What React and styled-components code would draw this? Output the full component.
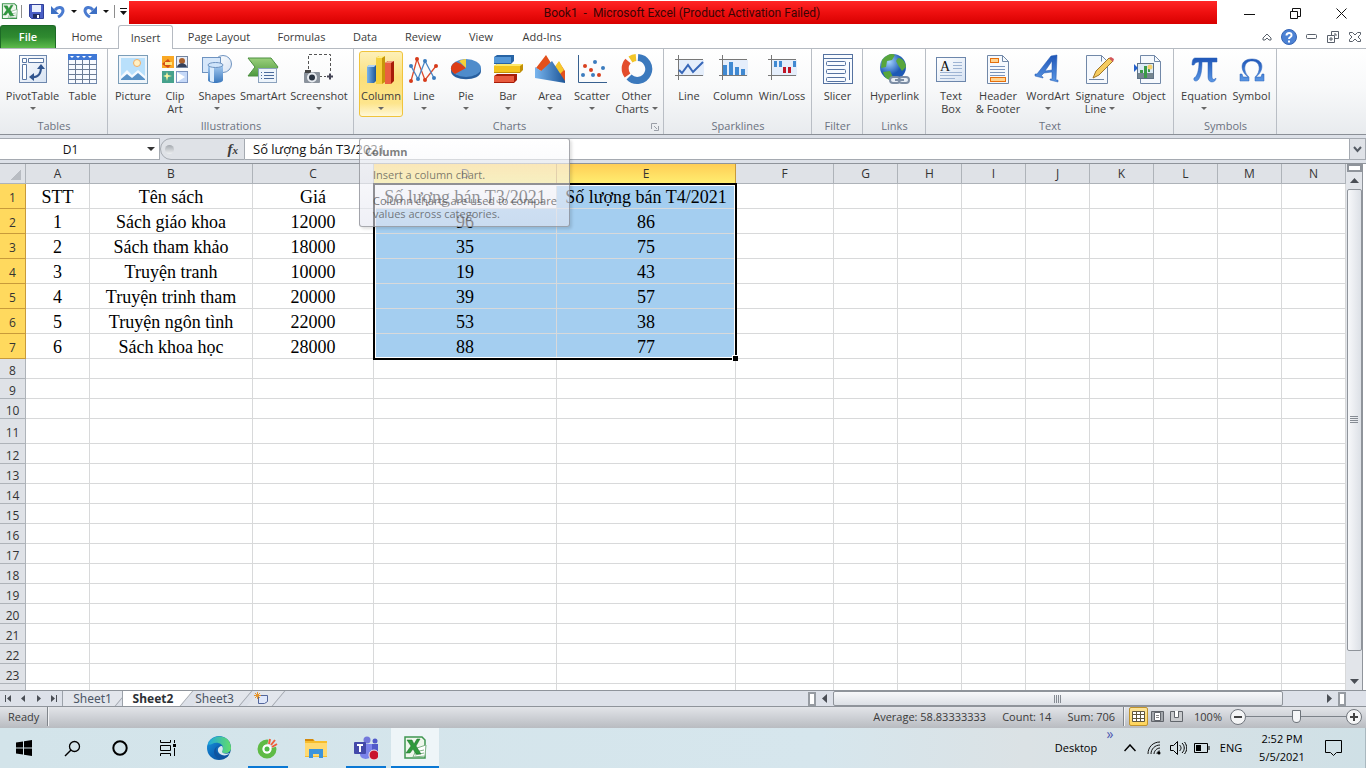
import React from 'react';
import styled, { createGlobalStyle, css } from 'styled-components';

const Global = createGlobalStyle`
  *, *::before, *::after { box-sizing: border-box; }
  body { margin: 0; font-family: 'Open Sans', 'Noto Sans', sans-serif; font-size: 12px; color: #3b3b3b; background: #fff; }
  button, input { font: inherit; color: inherit; border: 0; padding: 0; background: none; margin: 0; }
  svg { display: block; }
`;

const Page = styled.div`
  display: flex;
  flex-direction: column;
  height: 100vh;
  min-height: 480px;
  overflow: hidden;
`;

/* ---------- Title bar ---------- */
const TitleBar = styled.header`
  display: flex;
  height: 25px;
  flex: none;
`;
const QuickAccess = styled.div`
  display: flex;
  align-items: center;
  width: 129px;
  height: 23px;
  padding-left: 1px;
`;
const QuickButton = styled.button`
  display: flex;
  justify-content: center;
  width: ${(p) => p.$w}px;
`;
const Sep = styled.span`
  width: 1px;
  height: 13px;
  margin: 0 3px;
  background: #8d8d8d;
`;
const Caption = styled.h1`
  flex: 1;
  margin: 1px 0;
  padding-left: 18px;
  font-family: Roboto, sans-serif;
  font-size: 12px;
  line-height: 24px;
  font-weight: 400;
  text-align: center;
  white-space: pre;
  color: #3a0505;
  background: linear-gradient(#ff2626, #ee0f0f 50%, #d80000);
`;
const WindowButtons = styled.div`
  display: flex;
  padding: 2px 2px 0 9px;
`;
const WindowButton = styled.button`
  display: flex;
  align-items: center;
  justify-content: center;
  width: ${(p) => p.$w || 46}px;
  height: 23px;
`;

/* ---------- Ribbon tabs ---------- */
const TabRow = styled.nav`
  display: flex;
  flex: none;
  height: 24px;
  border-bottom: 1px solid #b5bac1;
`;
const Tab = styled.button`
  width: ${(p) => p.$w}px;
  height: 23px;
  font-size: 11px;
  line-height: 22px;
  text-align: center;
  ${(p) => p.$file && css`
    color: #fff;
    font-weight: 600;
    border: 1px solid #1d6a26;
    border-bottom: 0;
    border-radius: 3px 3px 0 0;
    background: linear-gradient(#257a2b, #2f8a30 50%, #5cbb4b);
  `}
  ${(p) => p.$active && css`
    height: 24px;
    border: 1px solid #b5bac1;
    border-bottom: 0;
    border-radius: 3px 3px 0 0;
    background: #fff;
  `}
`;
const TabTools = styled.div`
  display: flex;
  margin-left: auto;
`;

/* ---------- Ribbon ---------- */
const Ribbon = styled.section`
  position: relative;
  z-index: 5;
  display: flex;
  flex: none;
  height: 86px;
  background: linear-gradient(#fff, #f8f9fa 45%, #e8ebee);
  border-bottom: 1px solid #8a8f96;
`;
const Group = styled.div`
  position: relative;
  display: flex;
  flex-direction: column;
  padding: 2px 4px 0 ${(p) => p.$left || 4}px;
  box-shadow: inset -1px 0 #b9bec5;
`;
const GroupButtons = styled.div`
  display: flex;
  height: 68px;
`;
const GroupLabel = styled.div`
  font-size: 11px;
  line-height: 14px;
  text-align: center;
  color: #6b7280;
`;
const ToolWrap = styled.div`
  position: relative;
`;
const Tool = styled.button`
  display: flex;
  flex-direction: column;
  align-items: center;
  width: ${(p) => p.$w}px;
  height: 66px;
  padding-top: 2px;
  border: 1px solid transparent;
  border-radius: 3px;
  font-size: 11px;
  line-height: 13px;
  white-space: nowrap;
  ${(p) => p.$hot && css`
    border-color: #f0c43c;
    background: linear-gradient(#fdf0b8, #fbdf7a 40%, #fde58c 80%, #fff8d8);
  `}
`;
const ToolText = styled.span`
  margin-top: 3px;
  display: block;
`;
const ToolLine = styled.span`
  display: flex;
  align-items: center;
  justify-content: center;
  gap: 3px;
  height: 13px;
`;
const Down = styled.i`
  border: ${(p) => p.$size || 3}px solid transparent;
  border-top-color: ${(p) => p.$c || '#666'};
  border-bottom: 0;
`;
const Launcher = styled.button`
  position: absolute;
  right: 5px;
  bottom: 3px;
`;
const Tooltip = styled.div`
  position: absolute;
  top: 87px;
  left: 0;
  width: 211px;
  height: 89px;
  padding: 8px 13px 0;
  border: 1px solid rgba(110, 112, 120, 0.6);
  border-radius: 3px;
  background: linear-gradient(rgba(255, 255, 255, 0.6), rgba(228, 229, 240, 0.6));
  box-shadow: 2px 2px 3px rgba(0, 0, 0, 0.12);
  font-size: 11px;
  line-height: 13px;
  color: rgba(70, 70, 70, 0.7);
  white-space: nowrap;
`;
const TipTitle = styled.strong`
  display: block;
  margin: -2px 0 10px -8px;
`;
const TipText = styled.p`
  margin: 0 0 13px;
`;

/* ---------- Formula bar ---------- */
const FormulaBar = styled.div`
  display: flex;
  flex: none;
  height: 28px;
  padding: 3px 0;
  background: #dde1e8;
`;
const NameBox = styled.div`
  display: flex;
  align-items: center;
  gap: 6px;
  width: 160px;
  border: 1px solid #a5aab1;
  border-left: 0;
  background: #fff;
`;
const NameInput = styled.input`
  width: 141px;
  text-align: center;
  color: #111;
`;
const FxArea = styled.div`
  display: flex;
  align-items: center;
  justify-content: space-between;
  width: 85px;
  padding: 0 6px 0 4px;
  border: 1px solid #a5aab1;
  border-radius: 11px 0 0 11px;
  background: #dfe2e7;
`;
const Knob = styled.span`
  width: 9px;
  height: 9px;
  border-radius: 5px;
  background: linear-gradient(#a4a9af, #eef0f2);
`;
const Fx = styled.button`
  font: italic bold 15px/20px 'Liberation Serif', serif;
  small { font-size: 11px; }
`;
const FormulaInput = styled.input`
  flex: 1;
  min-width: 0;
  padding-left: 8px;
  border: solid #a5aab1;
  border-width: 1px 0;
  background: #fff;
  font-size: 13px;
  color: #111;
`;
const Expand = styled.button`
  display: flex;
  align-items: center;
  justify-content: center;
  width: 17px;
  border: 1px solid #a5aab1;
  background: #dfe2e7;
`;

/* ---------- Grid ---------- */
const SheetArea = styled.main`
  display: flex;
  flex: 1;
  min-height: 0;
  border-top: 1px solid #8f949b;
`;
const GridView = styled.div`
  position: relative;
  flex: 1;
  min-width: 0;
  overflow: hidden;
`;
const Grid = styled.table`
  width: 100%;
  min-width: 1346px;
  table-layout: fixed;
  border-collapse: separate;
  border-spacing: 0;
`;
const ColHead = styled.th`
  height: 20px;
  padding: 0;
  font-weight: 400;
  font-size: 12px;
  line-height: 19px;
  color: #333;
  border: solid #aeb3b9;
  border-width: 0 1px 1px 0;
  background: ${(p) => (p.$on ? 'linear-gradient(#ffce56, #ffed70)' : '#dfe2e7')};
  ${(p) => p.$on && css`border-right-color: #c89a3a;`}
`;
const RowHead = styled.th`
  padding: 3px 0 0;
  font-weight: 400;
  font-size: 12px;
  line-height: 15px;
  color: #333;
  border: solid ${(p) => (p.$on ? '#c89a3a' : '#aeb3b9')};
  border-width: 0 1px 1px 0;
  background: ${(p) => (p.$on ? '#ffd95e' : '#dfe2e7')};
`;
const Row = styled.tr`
  height: ${(p) => (p.$tall ? 25 : 20)}px;
`;
const Cell = styled.td`
  padding: ${(p) => (p.$filled ? 2 : 0)}px 0 0;
  border: solid #d8d9da;
  border-width: 0 1px 1px 0;
  font: 18px/22px 'Liberation Serif', serif;
  color: #000;
  text-align: center;
  white-space: nowrap;
  background: ${(p) => (p.$sel ? '#a4cef0' : '#fff')};
`;
const Selection = styled.div`
  position: absolute;
  left: 373px;
  top: 19px;
  width: 364px;
  height: 177px;
  border: 2px solid #000;
  box-shadow: inset 0 0 0 1px #fff;
  &::after {
    content: '';
    position: absolute;
    right: -3px;
    bottom: -3px;
    width: 6px;
    height: 6px;
    background: #000;
    border: solid #fff;
    border-width: 1px 0 0 1px;
  }
`;
const Corner = styled.div`
  margin: 3px 4px 2px auto;
  width: 11px;
  height: 11px;
  background: linear-gradient(135deg, transparent 50%, #b8bcc2 50%);
`;

const VScroll = styled.div`
  display: flex;
  flex-direction: column;
  align-items: center;
  width: 17px;
  margin-right: 3px;
  border-right: 1px solid #8f949b;
  background: #e2e5ea;
`;
const VSplit = styled.div`
  width: 15px;
  height: 8px;
  border: 2px solid #8f949b;
  background: #fff;
`;
const ScrollArrow = styled.button`
  display: flex;
  align-items: center;
  justify-content: center;
  flex: none;
  width: 17px;
  height: 17px;
`;
const VThumb = styled.div`
  display: flex;
  align-items: center;
  justify-content: center;
  flex: 1;
  width: 15px;
  margin-bottom: 22px;
  border: 1px solid #8f949b;
  border-radius: 2px;
  background: linear-gradient(90deg, #f7f8fa, #dce0e6);
`;

/* ---------- Sheet tabs ---------- */
const SheetBar = styled.div`
  display: flex;
  flex: none;
  height: 17px;
  padding-right: 20px;
  border: solid #8f949b;
  border-width: 1px 0;
  background: #dde1e9;
`;
const SheetNav = styled.div`
  display: flex;
  align-items: center;
  width: 62px;
  padding-left: 1px;
`;
const NavButton = styled.button`
  display: flex;
  justify-content: center;
  width: 15px;
`;
const SheetTabs = styled.div`
  display: flex;
  flex: 1;
`;
const SheetTab = styled.button`
  position: relative;
  z-index: ${(p) => (p.$active ? 2 : 1)};
  width: ${(p) => p.$w}px;
  height: 15px;
  padding-right: ${(p) => (p.$first ? 0 : 4)}px;
  font: 12px/15px 'Noto Sans', sans-serif;
  font-weight: ${(p) => (p.$active ? 700 : 400)};
  color: ${(p) => (p.$active ? '#2e3136' : '#4c5666')};
  ${(p) => (p.$active || p.$first) && css`
    border-left: 1px solid #9ca2aa;
    background: linear-gradient(${p.$active ? '#fff, #fff' : '#e3e6ec, #e3e6ec'}) 0 0 / 50% 100% no-repeat;
  `}
  &::before {
    content: '';
    position: absolute;
    z-index: -1;
    inset: 0 0 0 20%;
    border-right: 1px solid #9ca2aa;
    transform: skewX(-40deg);
    background: ${(p) => (p.$active ? '#fff' : '#e3e6ec')};
  }
  svg { margin: 0 auto; }
`;
const HScroll = styled.div`
  display: flex;
  align-items: center;
  flex: 0 0 40%;
`;
const HSplit = styled.div`
  width: 8px;
  height: 14px;
  border: 2px solid #969ba2;
  background: #fff;
`;
const HThumb = styled.div`
  display: flex;
  align-items: center;
  justify-content: center;
  flex: 1;
  height: 15px;
  margin-right: 38px;
  border: 1px solid #8f949b;
  border-radius: 2px;
  background: linear-gradient(#f7f8fa, #dce0e6);
`;

/* ---------- Status bar ---------- */
const StatusBar = styled.footer`
  display: flex;
  align-items: center;
  flex: none;
  height: 21px;
  padding: 0 4px 2px 8px;
  font-size: 11px;
  background: linear-gradient(#e2e4e8, #cdd0d5 50%, #b9bcc1);
`;
const StatusSep = styled.span`
  width: 2px;
  height: 19px;
  margin: 0 4px 0 8px;
  background: linear-gradient(90deg, #80858b 50%, #f1f2f4 50%);
`;
const Totals = styled.div`
  display: flex;
  gap: 16px;
  margin-left: auto;
`;
const ViewButton = styled.button`
  display: flex;
  align-items: center;
  justify-content: center;
  width: 19px;
  height: 19px;
  border: 1px solid ${(p) => (p.$on ? '#c2942c' : 'transparent')};
  border-radius: 2px;
  background: ${(p) => (p.$on ? 'linear-gradient(#fbe49b, #ffd55a)' : 'none')};
`;
const ZoomText = styled.button`
  width: 44px;
  text-align: center;
`;
const Zoom = styled.input`
  appearance: none;
  width: 100px;
  height: 17px;
  background: linear-gradient(#7c8289, #7c8289) 0 50% / 100% 1px no-repeat;
  &::-webkit-slider-thumb {
    appearance: none;
    width: 9px;
    height: 13px;
    border: 1px solid #6d737a;
    border-radius: 1px 1px 5px 5px;
    background: #f5f6f8;
  }
`;

/* ---------- Taskbar ---------- */
const Taskbar = styled.footer`
  display: flex;
  align-items: stretch;
  flex: none;
  height: 40px;
  color: #000;
  background: linear-gradient(90deg, #d3e4ea, #d6e6ed 60%, #dbe2e5 75%, #cfe0e6);
`;
const TaskButton = styled.button`
  position: relative;
  display: flex;
  align-items: center;
  justify-content: center;
  width: 48px;
  margin-right: ${(p) => p.$gap || 0}px;
  background: ${(p) => (p.$active ? '#eef5f8' : 'none')};
  ${(p) => p.$running && css`
    &::after {
      content: '';
      position: absolute;
      bottom: 0;
      left: ${p.$active ? 0 : 4}px;
      right: ${p.$active ? 0 : 4}px;
      height: 2px;
      background: #0a78d4;
    }
  `}
`;
const Tray = styled.div`
  display: flex;
  align-items: center;
  margin-left: auto;
`;
const TrayItem = styled.button`
  display: flex;
  align-items: center;
  justify-content: center;
  width: ${(p) => p.$w}px;
  height: 40px;
  font-size: 11px;
  line-height: 18px;
  white-space: pre;
`;
const More = styled(TrayItem)`
  align-items: flex-start;
  font-size: 14px;
  line-height: 12px;
  color: #4b57b0;
`;
const ShowDesktop = styled.button`
  width: 12px;
  height: 40px;
  margin-left: 4px;
  border-right: 1px solid #a9b8bf;
`;

/* ---------- Drawings ---------- */
const Svg = ({ s = 32, w, h, children, box }) => (
  <svg width={w || s} height={h || s} viewBox={box || `0 0 ${w || s} ${h || s}`} fill="none" aria-hidden="true">{children}</svg>
);
const DefsSvg = styled.svg`
  position: absolute;
`;
const Defs = () => (
  <DefsSvg width="0" height="0" aria-hidden="true">
    <defs>
      <linearGradient id="blue" x2="0" y2="1"><stop stopColor="#a9cdf2" /><stop offset="1" stopColor="#3a78bd" /></linearGradient>
      <linearGradient id="bar" x2="1" y2="0"><stop stopColor="#79b5ee" /><stop offset="1" stopColor="#1d5698" /></linearGradient>
      <linearGradient id="paper" x2="1" y2="1"><stop stopColor="#fff" /><stop offset="1" stopColor="#d7e3f3" /></linearGradient>
      <linearGradient id="green" x2="0" y2="1"><stop stopColor="#9bd07c" /><stop offset="1" stopColor="#4e9a3e" /></linearGradient>
      <linearGradient id="edge" x2="1" y2="1"><stop stopColor="#1b9de2" /><stop offset=".5" stopColor="#0c66b8" /><stop offset="1" stopColor="#0b4a92" /></linearGradient>
      <linearGradient id="edge2" x2="1" y2="0"><stop stopColor="#20a7dc" /><stop offset="1" stopColor="#62dd6a" /></linearGradient>
      <radialGradient id="globe" cx=".35" cy=".3"><stop stopColor="#a5d4ff" /><stop offset="1" stopColor="#1d59b5" /></radialGradient>
      <linearGradient id="glyph" x2="0" y2="1"><stop stopColor="#1f56b8" /><stop offset="1" stopColor="#5a97e4" /></linearGradient>
    </defs>
  </DefsSvg>
);

const navy = '#5572a0';
const icons = {
  pivot: <><rect x="2.5" y="1.5" width="27" height="27" fill="url(#paper)" stroke="#6d87ad" /><path d="M5.500 4.500h4v4h-4zM11.500 4.500h15v4h-15zM5.500 10.500h4v15h-4z" fill="#fff" stroke="#5b78a4" /><path d="M14 23c8 1 10-4 10-10" stroke="#30548e" strokeWidth="2" /><path d="M12 23l5-4v8zM24 10l-4 5h8z" fill="#30548e" /></>,
  table: <><rect x="1.5" y=".5" width="28" height="29" fill="#f7faff" stroke="#7189ad" /><rect x="1" y="0" width="29" height="6" fill="#3f78d6" /><path d="M3 2h4l-2 2zM9 2h4l-2 2zM15 2h4l-2 2zM21 2h4l-2 2z" fill="#fff" /><path d="M8.500 6v24M15.500 6v24M22.500 6v24M1 10.500h29M1 15.500h29M1 20.500h29M1 25.500h29" stroke="#6b7c96" /></>,
  picture: <><rect x="1.5" y="1.5" width="29" height="28" fill="#eef5fb" stroke="#7b9db8" /><rect x="4" y="4" width="24" height="22" fill="#b9e0fb" /><circle cx="20" cy="9" r="3.5" fill="#fff0c4" stroke="#f3ae65" /><path d="M4 22l6-6 5 5 6-5 7 6v4H4z" fill="#f5faff" /><path d="M4 25l6-5 5 4 6-5 7 6v1H4z" fill="#5a93c8" /></>,
  clip: <><rect x="3" y="2" width="12" height="12" fill="#f9a824" /><path d="M3 10l6-5 4 5-4 4z" fill="#d34c16" /><path d="M6 8h7v3H6z" fill="#ffe47b" /><rect x="17.5" y="2.5" width="11" height="11" fill="#e8eef8" stroke="#7385a0" /><circle cx="23" cy="7" r="3" fill="#a9602d" /><path d="M18 13c1-5 9-5 10 0z" fill="#33415c" /><rect x="3" y="17" width="12" height="12" fill="#46a28d" /><path d="M8 18l1 3 4 1-4 1-1 4-1-4-3-1 3-1z" fill="#f9f3a0" /><rect x="17.5" y="17.5" width="11" height="11" fill="#c6d9f8" stroke="#7c95c2" /><path d="M18 18l8 5-8 5z" fill="#fff" /></>,
  shapes: <><circle cx="22" cy="10" r="8.5" fill="url(#paper)" stroke="#6e93c0" /><rect x="1.5" y="3.5" width="18" height="15" fill="#d6e7fa" stroke="#6e93c0" /><path d="M7 11v15c0 4 15 4 15 0V11z" fill="url(#blue)" /><path d="M9 13h4v15c-3 0-4-1-4-1z" fill="#dcecfc" /><ellipse cx="14.5" cy="11" rx="7.5" ry="2.5" fill="#cfe4fa" stroke="#6e93c0" /></>,
  smart: <><path d="M1 4h23l7 9-7 9H1l7-9z" fill="url(#green)" stroke="#4c8f40" /><rect x="11.5" y="14.5" width="18" height="14" fill="#edf4fb" stroke="#8ba2bd" /><path d="M17 18.500h10M17 21.500h10M17 24.500h10M14 18.500h1M14 21.500h1M14 24.500h1" stroke="#4b6b9c" /></>,
  shot: <><path d="M5.500 15V.5h22v17M16 22.500h7" stroke="#555" strokeDasharray="3 2" /><path d="M24 22.500h6M27 19.500v6" stroke="#445" strokeWidth="2" /><rect x="1" y="18" width="16" height="11" rx="1" fill="#8a929c" /><rect x="2" y="16" width="6" height="3" fill="#444" /><circle cx="9" cy="23.5" r="5" fill="#e8ecf1" /><circle cx="9" cy="23.5" r="3" fill="#2a3442" /></>,
  column: <><path d="M2 13l2-2h7v16l-2 2H2z" fill="url(#bar)" /><path d="M2 13l2-2h7l-2 2z" fill="#b0d2f2" /><path d="M11 4l3-2h6v26l-3 2h-6z" fill="#c6960a" /><path d="M11 4h6v26h-6z" fill="#f5d03c" /><path d="M11 4l3-2h6l-3 2z" fill="#fff08a" /><path d="M20 9l3-2h6v20l-3 3h-6z" fill="#a71c08" /><path d="M20 9h6v21h-6z" fill="#ea5f41" /><path d="M20 9l3-2h6l-3 2z" fill="#f29b7e" /></>,
  line: <><path d="M3 27L9 5l8 21 11-14" stroke="#dd4a2b" strokeWidth="1.3" /><path d="M3 12l7 13L17 7l9 17" stroke="#4a86c5" strokeWidth="1.3" /><g fill="#d63a1a"><circle cx="3" cy="27" r="2" /><circle cx="9" cy="5" r="2" /><circle cx="17" cy="26" r="2" /><circle cx="28" cy="12" r="2" /></g><g fill="#3a7bbd"><circle cx="3" cy="12" r="2" /><circle cx="10" cy="25" r="2" /><circle cx="17" cy="7" r="2" /><circle cx="26" cy="24" r="2" /></g></>,
  pie: <><path d="M1 14v3c0 11 30 11 30 0v-3z" fill="#285f9f" /><ellipse cx="16" cy="14" rx="15" ry="9" fill="#4f8ccb" /><path d="M16 14L5 20c-6-4-5-9 1-12l5 2z" fill="#dd3e16" /><path d="M16 14L9 7c2-1 5-2 7-2z" fill="#f5cf38" /></>,
  bar: <><path d="M2 3l3-2h17v6l-3 3H2z" fill="#2763a4" /><path d="M2 3h17v6H2z" fill="#5597d7" /><path d="M2 12l3-2h26v6l-3 3H2z" fill="#c18f06" /><path d="M2 12h26v6H2z" fill="#f3c41d" /><path d="M2 12l3-2h26l-3 2z" fill="#fde86b" /><path d="M2 22l3-2h20v6l-3 3H2z" fill="#a71c08" /><path d="M2 22h20v6H2z" fill="#e85a3e" /></>,
  area: <><path d="M2 14L12 1l8 13 5-6 6 9v10l-14-4z" fill="#e2501c" /><path d="M20 14l5-7 5 9-5 5z" fill="#f6c82c" /><path d="M1 13l6 4 11-10 13 20v2L1 24z" fill="url(#bar)" /></>,
  scatter: <><path d="M2.500 1v27.500H31" stroke="#37608f" /><g fill="#d8401e"><circle cx="9" cy="12" r="2" /><circle cx="15" cy="16" r="2" /><circle cx="23" cy="21" r="2" /></g><g fill="#3c7cbe"><circle cx="19" cy="8" r="2" /><circle cx="27" cy="14" r="2" /><circle cx="7" cy="21" r="2" /><circle cx="17" cy="21" r="2" /></g></>,
  other: <><path d="M17 3.500A11.500 11.500 0 1 1 8 23" stroke="#3b79bd" strokeWidth="7" /><path d="M15 3.500A11.500 11.500 0 009.500 5.500" stroke="#f2c528" strokeWidth="7" /><path d="M7 7a11.500 11.500 0 00-.5 14.500" stroke="#e34d2c" strokeWidth="7" /></>,
  sline: <><rect x="5" y="6" width="26" height="16" fill="#e5eefb" /><path d="M2 5.500h28M2 21.500h28M5.500 1v25" stroke="#777" /><path d="M6 16l3 3 6-8 5 7 10-10" stroke="#3767b8" strokeWidth="2" /></>,
  scol: <><rect x="5" y="6" width="26" height="16" fill="#e5eefb" /><path d="M2 5.500h28M2 21.500h28M5.500 1v25" stroke="#777" /><path d="M6 11h4v10H6zM12 8h4v13h-4zM18 13h4v8h-4zM24 15h4v6h-4z" fill="#4089d2" /></>,
  swin: <><rect x="5" y="6" width="26" height="16" fill="#e5eefb" /><path d="M2 5.500h28M2 21.500h28M5.500 1v25" stroke="#777" /><path d="M8 7h3v6H8zM13 7h3v6h-3zM27 7h3v6h-3z" fill="#4089d2" /><path d="M17 13h3v6h-3zM22 13h3v6h-3z" fill="#c01526" /></>,
  slicer: <><rect x="1.5" y=".5" width="29" height="29" fill="#f8fbff" stroke={navy} /><path d="M2 4.500h28M27.500 8v18" stroke={navy} /><rect x="4.5" y="7.5" width="19" height="4" rx="1" stroke={navy} /><rect x="4.5" y="15.5" width="19" height="4" rx="1" stroke={navy} /><rect x="4.5" y="23.5" width="19" height="4" rx="1" stroke={navy} /></>,
  link: <><circle cx="14" cy="13" r="13" fill="url(#globe)" /><path d="M3 6c5-6 10-7 13-5l-3 5-5 1-1 6-5 1zM19 4c5 0 8 5 8 9l-4 4-4-6-2-4zM4 18l7-1 3 6-3 3c-4-1-6-4-7-8z" fill="#58a63c" /><g stroke="#7d8ea5" strokeWidth="2"><rect x="11" y="23" width="10" height="6" rx="3" fill="#e8eef5" /><rect x="20" y="23" width="10" height="6" rx="3" fill="#e8eef5" /><path d="M16 26h9" /></g></>,
  textbox: <><rect x="1.5" y="3.5" width="29" height="24" fill="url(#paper)" stroke="#6c86ab" /><text x="5" y="17" fontFamily="Liberation Serif" fontSize="14" fill="#111">A</text><path d="M18 8.500h9M18 11.500h9M18 14.500h9M5 18.500h22M5 21.500h22M5 24.500h15" stroke="#9eb4d3" /></>,
  header: <><path d="M5.500 1.500h15l6 6v22h-21z" fill="#f6f9fd" stroke="#7188a8" /><path d="M20.500 1.500v6h6" stroke="#7188a8" /><path d="M8 12.500h15M8 15.500h15M8 18.500h15M8 21.500h15" stroke="#7a94bb" /><rect x="8.5" y="4.5" width="8" height="4" fill="#ffd28f" stroke="#e56f0c" /><rect x="8.5" y="23.5" width="15" height="4" fill="#ffd28f" stroke="#e56f0c" /></>,
  wordart: <path fillRule="evenodd" d="M19 2l6-1-1 25h2v2l-8-2v-1h2v-7l-8 1-3 3 2 1v1l-8-2v-2h2zm1 5l-7 10 7-1z" fill="url(#glyph)" stroke="#1f56b0" strokeWidth=".5" />,
  sign: <><path d="M2.500 1.500h15l6 6v22h-21z" fill="#f6f9fd" stroke="#7188a8" /><path d="M17.500 1.500v6M5 25.500h15" stroke="#7188a8" /><path d="M9 24l3-7L25 4l4 3-14 14z" fill="#f6cc60" stroke="#9f7628" /><path d="M25 4l2-1 3 2-1 3z" fill="#d4555a" /></>,
  object: <><path d="M7.500 1.500h14l6 6v22h-20z" fill="#f6f9fd" stroke="#7188a8" /><path d="M21.500 1.500v6h6" stroke="#7188a8" /><rect x="4.5" y="9.5" width="16" height="15" fill="#dceaf5" stroke="#5e7287" /><path d="M5 19h15v5H5z" fill="#75858f" /><path d="M11 12h3v12h-3zM7 16h3v3H7zM15 15h2v3h-2z" fill="#3b9a48" /><circle cx="17" cy="13" r="2.5" fill="#f5d06c" /><path d="M1 10l4 4-4 4z" fill="#2561cb" /></>,
  pi: <path d="M7 4h22v4h-5v14c0 4 2 4 4 2 0 5-8 6-8-1V8h-6c0 8-1 15-4 18-2 2-5 1-4-2 3-1 5-8 5-16-3 0-4 1-5 3H4c0-4 1-7 3-7z" fill="url(#glyph)" stroke="#2a62ba" strokeWidth=".5" />,
  omega: <path d="M4 27v-7h2l1 3h5C4 17 3 5 16 5s12 12 4 18h5l1-3h2v7h-9v-4c6-5 6-16-3-16s-9 11-3 16v4z" fill="url(#glyph)" stroke="#2a62ba" strokeWidth=".5" />,
};

const groups = [
  ['Tables', [['pivot', 57, 'PivotTable', null, true], ['table', 43, 'Table']]],
  ['Illustrations', [['picture', 42, 'Picture'], ['clip', 42, 'Clip', 'Art'], ['shapes', 42, 'Shapes', null, true], ['smart', 50, 'SmartArt'], ['shot', 62, 'Screenshot', null, true]]],
  ['Charts', [['column', 44, 'Column', null, true], ['line', 42, 'Line', null, true], ['pie', 42, 'Pie', null, true], ['bar', 42, 'Bar', null, true], ['area', 42, 'Area', null, true], ['scatter', 42, 'Scatter', null, true], ['other', 47, 'Other', 'Charts', true]]],
  ['Sparklines', [['sline', 42, 'Line'], ['scol', 46, 'Column'], ['swin', 52, 'Win/Loss']]],
  ['Filter', [['slicer', 43, 'Slicer']]],
  ['Links', [['link', 55, 'Hyperlink']]],
  ['Text', [['textbox', 42, 'Text', 'Box'], ['header', 52, 'Header', '& Footer'], ['wordart', 48, 'WordArt', null, true], ['sign', 56, 'Signature', 'Line', true], ['object', 42, 'Object']]],
  ['Symbols', [['pi', 52, 'Equation', null, true], ['omega', 43, 'Symbol']]],
];

const tabs = [['Home', 62], ['Insert', 55], ['Page Layout', 92], ['Formulas', 73], ['Data', 54], ['Review', 62], ['View', 54], ['Add-Ins', 68]];

const columns = [['A', 64], ['B', 163], ['C', 121], ['D', 183], ['E', 179], ['F', 98], ['G', 64], ['H', 64], ['I', 64], ['J', 64], ['K', 64], ['L', 64], ['M', 64], ['N', null]];

const data = [
  ['STT', 'Tên sách', 'Giá', 'Số lượng bán T3/2021', 'Số lượng bán T4/2021'],
  ['1', 'Sách giáo khoa', '12000', '96', '86'],
  ['2', 'Sách tham khảo', '18000', '35', '75'],
  ['3', 'Truyện tranh', '10000', '19', '43'],
  ['4', 'Truyện trinh tham', '20000', '39', '57'],
  ['5', 'Truyện ngôn tình', '22000', '53', '38'],
  ['6', 'Sách khoa học', '28000', '88', '77'],
];

const ExcelIcon = ({ s }) => (
  <Svg s={s} box="0 0 24 24">
    <path d="M2 1h17l3 3v18H2z" fill="#eef7ec" stroke="#3f9650" strokeWidth="1.5" />
    <path d="M14 12l9-3-1 11-12 1z" fill="#fff" stroke="#7fb287" />
    <path d="M12 16l9-2M12 19l9-2" stroke="#7fb287" />
    <path d="M4 4h5l2 4 3-5h3l-4 7 5 8h-5l-3-5-3 4H3l5-7z" fill="#2f9a3c" stroke="#1a6b2a" strokeWidth=".5" />
  </Svg>
);
const Undo = ({ flip }) => (
  <Svg s={16}><g transform={flip ? 'translate(16 0) scale(-1 1)' : undefined}>
    <path d="M5 6c3-4 8-3 8 1-.5 3-3 5-5 6" stroke="#4a7bd0" strokeWidth="3" /><path d="M1 2v8h8z" fill="#3c6fc4" />
  </g></Svg>
);
const Arrow = ({ d }) => <Svg w={9} h={9}><path d={d} fill="#4a4e55" /></Svg>;

function RibbonTool({ tool: [icon, w, label, second, menu] }) {
  const hot = icon === 'column';
  return (
    <ToolWrap>
      <Tool $w={w} $hot={hot}>
        <Svg>{icons[icon]}</Svg>
        <ToolText>
          <ToolLine>{label}</ToolLine>
          {(second || menu) && <ToolLine>{second}{menu && <Down />}</ToolLine>}
        </ToolText>
      </Tool>
      {hot && (
        <Tooltip role="tooltip">
          <TipTitle>Column</TipTitle>
          <TipText>Insert a column chart.</TipText>
          <TipText>Column charts are used to compare<br />values across categories.</TipText>
        </Tooltip>
      )}
    </ToolWrap>
  );
}

export default function App() {
  return (
    <Page>
      <Global />
      <Defs />
      <TitleBar>
        <QuickAccess>
          <ExcelIcon s={17} />
          <Sep />
          <QuickButton $w={22} aria-label="Save"><Svg s={15}><path d="M.5 .5h14v14h-12l-2-2z" fill="#4a5fc5" stroke="#303f98" /><path d="M3 1h9v7H3z" fill="#e9effc" /><path d="M4 10h7v4H4z" fill="#222f63" /><path d="M8 11h2v3H8z" fill="#fff" /></Svg></QuickButton>
          <QuickButton $w={22} aria-label="Undo"><Undo /></QuickButton>
          <QuickButton $w={10} aria-label="Undo list"><Down $c="#111" /></QuickButton>
          <QuickButton $w={22} aria-label="Redo"><Undo flip /></QuickButton>
          <QuickButton $w={10} aria-label="Redo list"><Down $c="#111" /></QuickButton>
          <Sep />
          <QuickButton $w={10} aria-label="Customize toolbar"><Svg w={7} h={8}><path d="M0 .5h7" stroke="#111" /><path d="M0 3h7L3.500 7z" fill="#111" /></Svg></QuickButton>
        </QuickAccess>
        <Caption>{'Book1  -  Microsoft Excel (Product Activation Failed)'}</Caption>
        <WindowButtons>
          <WindowButton aria-label="Minimize"><Svg s={11}><path d="M0 6.500h11" stroke="#111" /></Svg></WindowButton>
          <WindowButton aria-label="Restore"><Svg s={11}><path d="M.5 3.500h7v7h-7zM2.500 3V.5h8v8H8" stroke="#111" /></Svg></WindowButton>
          <WindowButton aria-label="Close"><Svg s={11}><path d="M.5 .5l10 10M10.500 .5l-10 10" stroke="#111" /></Svg></WindowButton>
        </WindowButtons>
      </TitleBar>

      <TabRow>
        <Tab $w={56} $file>File</Tab>
        {tabs.map(([t, w]) => <Tab key={t} $w={w} $active={t === 'Insert'}>{t}</Tab>)}
        <TabTools>
          <WindowButton $w={22} aria-label="Collapse ribbon"><Svg w={10} h={8}><path d="M1 5l4-4 4 4v2H7L5 5 3 7H1z" stroke="#59606b" /></Svg></WindowButton>
          <WindowButton $w={22} aria-label="Help"><Svg s={16}><circle cx="8" cy="8" r="7.5" fill="#4c82d4" stroke="#3565b5" /><path d="M5.500 6.500C5.500 3 11 3 10.500 6.500 10.500 8 8 8 8 10" stroke="#fff" strokeWidth="2" /><path d="M7 11.500h2v2H7z" fill="#fff" /></Svg></WindowButton>
          <WindowButton $w={22} aria-label="Minimize workbook"><Svg w={11} h={5}><rect x=".5" y=".5" width="10" height="4" rx="1" stroke="#59606b" /></Svg></WindowButton>
          <WindowButton $w={22} aria-label="Restore workbook"><Svg s={12}><path d="M4.500 4V.5h7v7H8M.5 4.500h7v7h-7zM3 7h2v2H3zM7 3h2v2" stroke="#59606b" /></Svg></WindowButton>
          <WindowButton $w={22} aria-label="Close workbook"><Svg w={12} h={10}><path d="M.5 .5h3L6 3 8.500 .5h3v2L9 5l2.500 2.500v2h-3L6 7 3.500 9.500h-3v-2L3 5 .5 2.500z" stroke="#59606b" /></Svg></WindowButton>
        </TabTools>
      </TabRow>

      <Ribbon>
        {groups.map(([name, tools]) => (
          <Group key={name} $left={name === 'Charts' ? 5 : 4}>
            <GroupButtons>{tools.map((t) => <RibbonTool key={t[0]} tool={t} />)}</GroupButtons>
            <GroupLabel>{name}</GroupLabel>
            {name === 'Charts' && <Launcher aria-label="Chart options"><Svg s={8}><path d="M.5 6V.5H6M3 3l3 3M7.500 3v4.500H3" stroke="#9a9fa7" /></Svg></Launcher>}
          </Group>
        ))}
      </Ribbon>

      <FormulaBar>
        <NameBox><NameInput aria-label="Name box" defaultValue="D1" /><Down $c="#333" $size={4} /></NameBox>
        <FxArea><Knob /><Fx aria-label="Insert function">f<small>x</small></Fx></FxArea>
        <FormulaInput aria-label="Formula bar" defaultValue="Số lượng bán T3/2021" />
        <Expand aria-label="Expand formula bar"><Svg w={9} h={7}><path d="M1 1l3.500 4L8 1" stroke="#555b64" strokeWidth="2" /></Svg></Expand>
      </FormulaBar>

      <SheetArea>
        <GridView>
          <Grid>
            <colgroup>
              <col width="26" />
              {columns.map(([c, w]) => <col key={c} width={w || undefined} />)}
            </colgroup>
            <thead>
              <tr>
                <ColHead><Corner /></ColHead>
                {columns.map(([c]) => <ColHead key={c} scope="col" $on={c === 'D' || c === 'E'}>{c}</ColHead>)}
              </tr>
            </thead>
            <tbody>
              {Array.from({ length: 24 }, (_, r) => (
                <Row key={r} $tall={r < 7 || r === 10}>
                  <RowHead scope="row" $on={r < 7}>{r + 1}</RowHead>
                  {columns.map(([c], i) => (
                    <Cell key={c} $filled={r < 7} $sel={r < 7 && (i === 4 || (i === 3 && r > 0))}>{data[r]?.[i]}</Cell>
                  ))}
                </Row>
              ))}
            </tbody>
          </Grid>
          <Selection />
        </GridView>
        <VScroll>
          <VSplit />
          <ScrollArrow aria-label="Scroll up"><Arrow d="M0 7l4.500-5L9 7z" /></ScrollArrow>
          <VThumb><Svg s={8}><path d="M0 .5h8M0 2.500h8M0 4.500h8M0 6.500h8" stroke="#858b93" /></Svg></VThumb>
          <ScrollArrow aria-label="Scroll down"><Arrow d="M0 2l4.500 5L9 2z" /></ScrollArrow>
        </VScroll>
      </SheetArea>

      <SheetBar>
        <SheetNav>
          <NavButton aria-label="First sheet"><Arrow d="M1 1h1v7H1zM7 1v7L3 4.500z" /></NavButton>
          <NavButton aria-label="Previous sheet"><Arrow d="M6 1v7L2 4.500z" /></NavButton>
          <NavButton aria-label="Next sheet"><Arrow d="M3 1v7l4-3.500z" /></NavButton>
          <NavButton aria-label="Last sheet"><Arrow d="M2 1v7l4-3.500zM7 1h1v7H7z" /></NavButton>
        </SheetNav>
        <SheetTabs>
          <SheetTab $w={60} $first>Sheet1</SheetTab>
          <SheetTab $w={65} $active>Sheet2</SheetTab>
          <SheetTab $w={59}>Sheet3</SheetTab>
          <SheetTab $w={33} aria-label="Insert worksheet"><Svg w={14} h={13}><path d="M4.500 3.500h9v6l-3 2h-6z" fill="#dfe7fa" stroke="#53669c" /><path d="M3.500 0v7M0 3.500h7M1 1l5 5M6 1L1 6" stroke="#e5952c" /></Svg></SheetTab>
        </SheetTabs>
        <HScroll>
          <HSplit />
          <ScrollArrow aria-label="Scroll left"><Arrow d="M7 0v9L2 4.500z" /></ScrollArrow>
          <HThumb><Svg s={8}><path d="M.5 0v8M2.500 0v8M4.500 0v8M6.500 0v8" stroke="#858b93" /></Svg></HThumb>
          <ScrollArrow aria-label="Scroll right"><Arrow d="M2 0v9l5-4.500z" /></ScrollArrow>
          <HSplit />
        </HScroll>
      </SheetBar>

      <StatusBar>
        <span>Ready</span>
        <StatusSep />
        <Totals><span>Average: 58.83333333</span><span>Count: 14</span><span>Sum: 706</span></Totals>
        <StatusSep />
        <ViewButton $on aria-label="Normal view"><Svg w={13} h={11}><path d="M.5 .5h12v10H.5zM4.500 0v11M8.500 0v11M0 3.500h13M0 7.500h13" fill="#fff" stroke="#61573d" /></Svg></ViewButton>
        <ViewButton aria-label="Page layout view"><Svg w={13} h={11}><path d="M.5 .5h12v10H.5z" fill="#a4a8ad" stroke="#61656b" /><path d="M3.500 1.500h6v8h-6z" fill="#fff" stroke="#61656b" /><path d="M5 4.500h3M5 6.500h3" stroke="#888" /></Svg></ViewButton>
        <ViewButton aria-label="Page break view"><Svg w={13} h={11}><path d="M.5 .5h12v10H.5z" fill="#c9cbce" stroke="#61656b" /><path d="M4.500 0v6.500h4V0" fill="#fff" stroke="#61656b" /></Svg></ViewButton>
        <ZoomText>100%</ZoomText>
        <button aria-label="Zoom out"><Svg s={16}><circle cx="8" cy="8" r="7.5" fill="#f4f5f6" stroke="#71767d" /><path d="M4 8h8" stroke="#444" strokeWidth="2" /></Svg></button>
        <Zoom type="range" aria-label="Zoom" defaultValue={50} />
        <button aria-label="Zoom in"><Svg s={16}><circle cx="8" cy="8" r="7.5" fill="#f4f5f6" stroke="#71767d" /><path d="M4 8h8M8 4v8" stroke="#444" strokeWidth="2" /></Svg></button>
      </StatusBar>

      <Taskbar>
        <TaskButton aria-label="Start"><Svg s={16}><path d="M0 2.500l7-1v6H0zM8 1.300L16 0v7.500H8zM0 8.500h7v6l-7-1zM8 8.500h8V16l-8-1.300z" fill="#000" /></Svg></TaskButton>
        <TaskButton aria-label="Search"><Svg s={17}><circle cx="10.5" cy="6.5" r="5" stroke="#000" strokeWidth="1.3" /><path d="M7 10l-6 6" stroke="#000" strokeWidth="1.5" /></Svg></TaskButton>
        <TaskButton aria-label="Cortana"><Svg s={16}><circle cx="8" cy="8" r="6.7" stroke="#000" strokeWidth="2" /></Svg></TaskButton>
        <TaskButton $gap={3} aria-label="Task view"><Svg s={16}><path d="M.5 0v2.500h10V0M.5 5.500h10v5H.5zM.5 16v-2.500h10V16M14.500 0v3M14.500 8v8" stroke="#000" /><path d="M13 4h3v3h-3z" fill="#000" /></Svg></TaskButton>
        <TaskButton $gap={1} aria-label="Edge"><Svg s={24}><circle cx="12" cy="12" r="12" fill="url(#edge)" /><path d="M1 8C5-3 24-2 24 12c0 4-4 6-8 5-2-1-1-2 0-4 1-5-6-8-11-5-2 1-3 1-4 0z" fill="url(#edge2)" /><path d="M9 13c0 6 6 9 13 6-4 6-15 5-15-3 0-4 4-7 7-6-3 0-5 1-5 3z" fill="#10549f" /><path d="M15 10c-5 0-6 7 0 9 3 1 6 0 8-2-3 1-7 1-8-1 0-1 2-3 0-6z" fill="#d9e8ee" /></Svg></TaskButton>
        <TaskButton $running aria-label="Browser"><Svg s={22}><circle cx="10" cy="12" r="7" stroke="#5fbb46" strokeWidth="5" /><path d="M10 9L12 0h9v9l-6 2z" fill="#d5e6ec" /><path d="M12 7l1-5M14 8l4-5M15 10l5-3" stroke="#ef5d3b" strokeWidth="2" /><circle cx="10" cy="12" r="4.5" fill="#fff" /><circle cx="10" cy="12" r="2.5" fill="#4fb848" /></Svg></TaskButton>
        <TaskButton $gap={2} aria-label="File explorer"><Svg w={22} h={20}><path d="M0 1h8l2 2h12v16H0z" fill="#f7bd2d" /><path d="M0 5h22v13H0z" fill="#ffd970" /><path d="M0 1h8l1 2H0z" fill="#d4890c" /><path d="M4 20v-9h14v9h-4v-4H8v4z" fill="#3c94dc" /></Svg></TaskButton>
        <TaskButton $gap={1} $running aria-label="Teams"><Svg s={24}><circle cx="13" cy="4" r="3.5" fill="#7378db" /><circle cx="21" cy="5" r="2.5" fill="#5059c9" /><path d="M15 8h9v8c0 3-4 6-7 4z" fill="#5059c9" /><path d="M6 8h12v10c0 6-12 7-12 0z" fill="#7b83eb" /><rect x="0" y="6" width="12" height="12" rx="1" fill="#4349aa" /><path d="M3 9h6M6 9v7" stroke="#fff" strokeWidth="2" /><circle cx="20" cy="19" r="5" fill="#c9142d" stroke="#eee" /></Svg></TaskButton>
        <TaskButton $running $active aria-label="Excel"><ExcelIcon s={24} /></TaskButton>
        <Tray>
          <TrayItem $w={52}>Desktop</TrayItem>
          <More $w={16}>»</More>
          <TrayItem $w={24} aria-label="Hidden icons"><Svg w={12} h={8}><path d="M.5 7L6 1l5.500 6" stroke="#000" strokeWidth="1.5" /></Svg></TrayItem>
          <TrayItem $w={24} aria-label="Network"><Svg s={14}><path d="M1 13C1 6 6 1 13 1M4 13c0-5 4-9 9-9M7 13c0-3 3-6 6-6M10 13c0-2 1-3 3-3" stroke="#111" /><circle cx="12" cy="12" r="1.5" fill="#000" /></Svg></TrayItem>
          <TrayItem $w={24} aria-label="Volume"><Svg w={17} h={14}><path d="M.5 4.500h3l4-4v13l-4-4h-3zM9.500 4c2 2 2 4 0 6M12 2c3 3 3 7 0 10M14.500 1c3 4 3 8 0 12" stroke="#000" /></Svg></TrayItem>
          <TrayItem $w={24} aria-label="Battery"><Svg w={16} h={10}><path d="M.5 .5h13v9H.5zM15 3v4" stroke="#000" /><path d="M2 2h5v6H2z" fill="#000" /></Svg></TrayItem>
          <TrayItem $w={34}>ENG</TrayItem>
          <TrayItem $w={68}>{'2:52 PM\n5/5/2021'}</TrayItem>
          <TrayItem $w={34} aria-label="Notifications"><Svg w={17} h={16}><path d="M.5 .5h16v12h-5l-3 3-3-3h-5z" stroke="#000" /></Svg></TrayItem>
          <ShowDesktop aria-label="Show desktop" />
        </Tray>
      </Taskbar>
    </Page>
  );
}
